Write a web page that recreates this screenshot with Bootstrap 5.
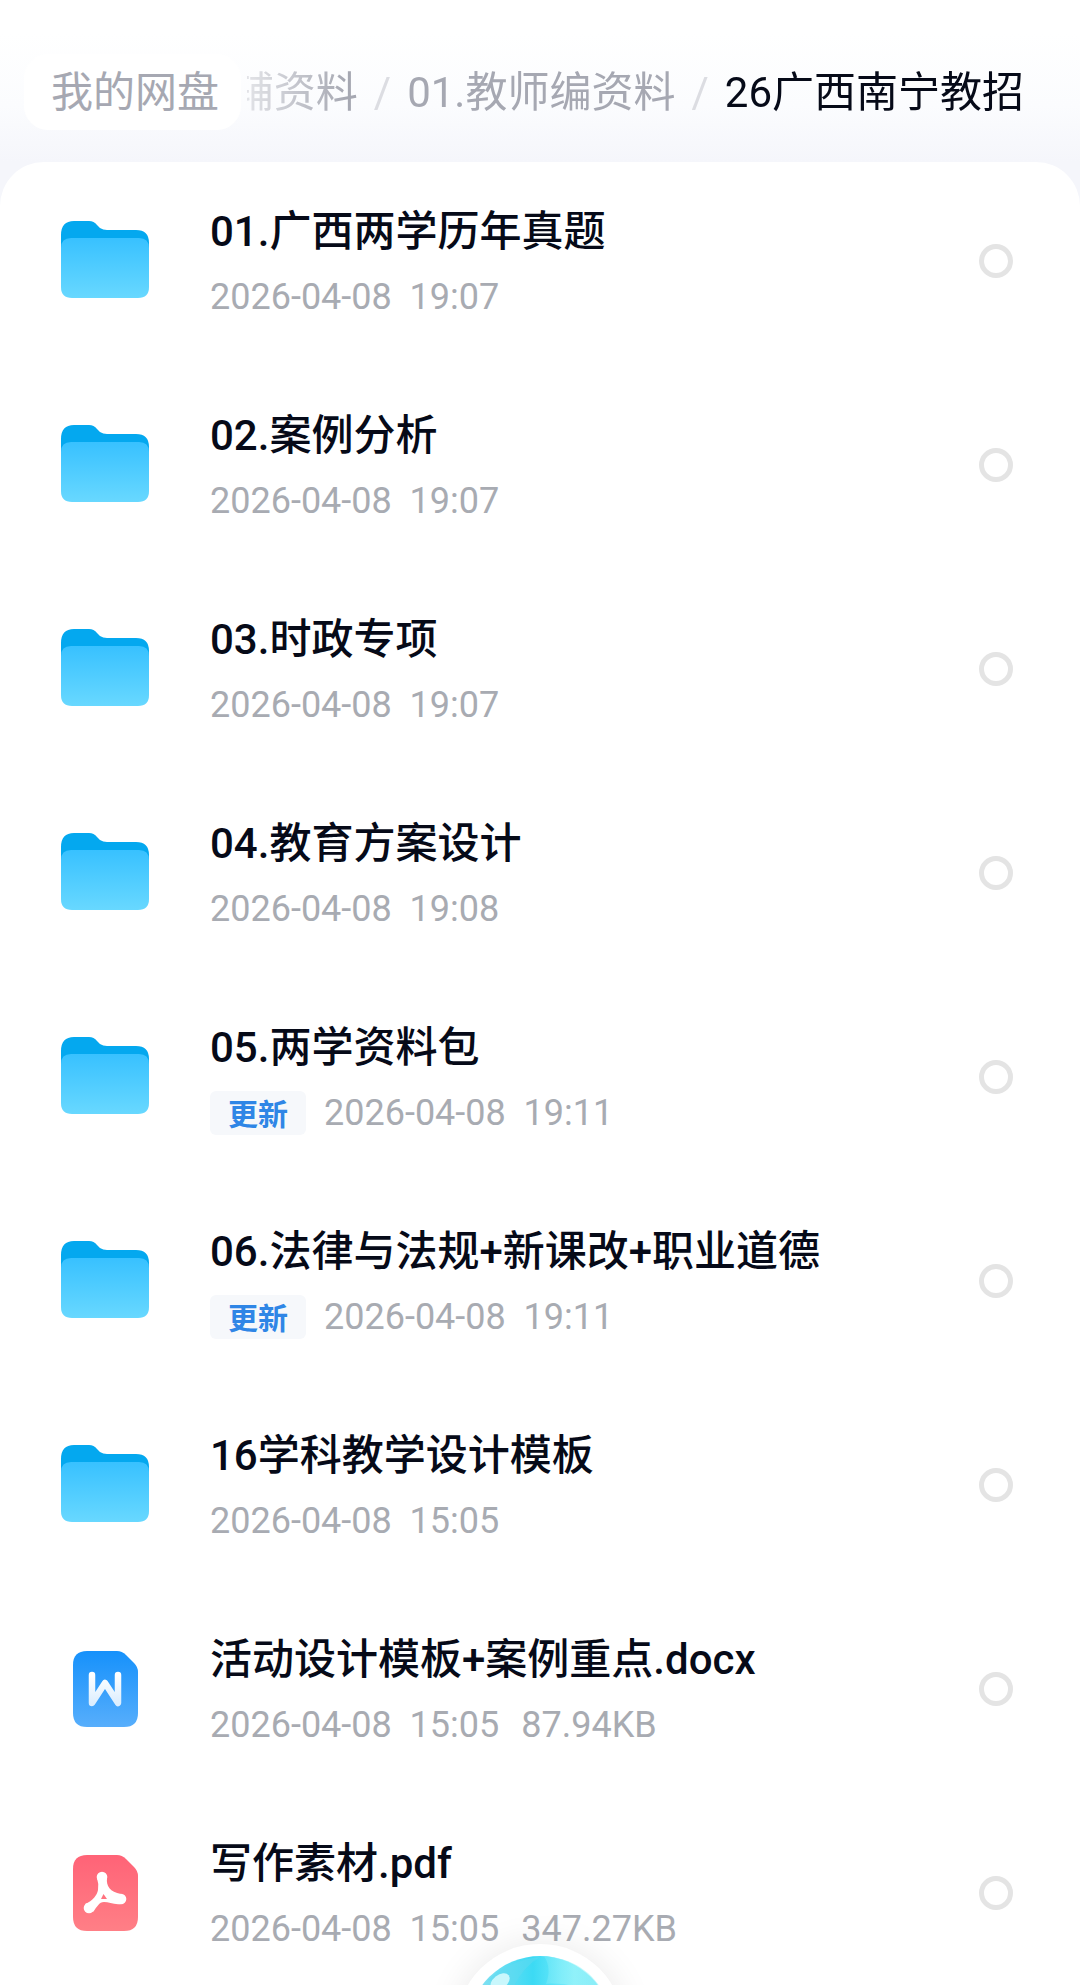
<!DOCTYPE html>
<html lang="zh-CN">
<head>
<meta charset="utf-8">
<meta name="viewport" content="width=device-width, initial-scale=1">
<title>26广西南宁教招</title>
<link href="https://cdn.jsdelivr.net/npm/bootstrap@5.3.0/dist/css/bootstrap.min.css" rel="stylesheet">
<style>
  body { font-family: Roboto, "Noto Sans CJK SC", sans-serif; background: #fff; color: #060a18; }
  a { color: inherit; text-decoration: none; }
  .path-bar { padding: 54px 56px 32px 24px; background: linear-gradient(#fff 20%, #fbfcfe 65%, #f5f6fb); }
  .path-bar, .file-name { font-size: 42px; line-height: 60px; }
  .path-root { padding: 9px 22px 7px 27px; border-radius: 24px; background: #fff; color: #a6a8b2; }
  .path-trail { -webkit-mask-image: linear-gradient(90deg, rgba(0,0,0,.3), #000 100px); mask-image: linear-gradient(90deg, rgba(0,0,0,.3), #000 100px); margin-left: 6px; padding-top: 2px; color: #a6a8b2; }
  .path-trail .breadcrumb-item + .breadcrumb-item { padding-left: 16px; }
  .path-trail .breadcrumb-item + .breadcrumb-item::before { padding-right: 16px; color: #dcdde2; }
  .path-trail .active { color: #060a18; }
  .file-panel { background: #f5f6fb; }
  .file-list { border-radius: 44px 44px 0 0; background: #fff; }
  .file-row { padding: 40px 67px 47px 60px; }
  .file-row:last-child { padding-bottom: 34px; }
  .file-icon { width: 90px; height: 80px; margin-right: 60px; }
  .file-name { font-weight: 500; margin-bottom: 13px; }
  .file-meta { font-size: 36px; line-height: 44px; color: #a8abb2; }
  .file-meta time { white-space: pre; }
  .file-size { margin-left: 22px; }
  .tag-new { padding: 3px 18px 0; margin-right: 18px; font-size: 30px; line-height: 41px; border-radius: 6px; background: #f6f8fb; color: #2f86e6; }
  .file-row .pick { width: 34px; height: 34px; margin: 0; border: 5px solid #e4e4e4; }
  .orb { width: 168px; height: 168px; bottom: -127px; padding: 12px; background: #fff; box-shadow: 0 0 36px rgba(0,0,0,.09); }
</style>
</head>
<body>
<svg class="position-absolute" width="0" height="0" aria-hidden="true">
  <defs>
    <linearGradient id="folderFace" x1="0" y1="0" x2="0" y2="1"><stop offset="0" stop-color="#38c1ff"/><stop offset="1" stop-color="#68d8ff"/></linearGradient>
    <linearGradient id="docFace" x1="0" y1="0" x2="0" y2="1"><stop offset="0" stop-color="#1691fb"/><stop offset="1" stop-color="#57aefc"/></linearGradient>
    <linearGradient id="docMark" x1="0" y1="0" x2="0" y2="1"><stop offset="0" stop-color="#fff"/><stop offset="1" stop-color="#dceefe"/></linearGradient>
    <linearGradient id="pdfFace" x1="0" y1="0" x2="0" y2="1"><stop offset="0" stop-color="#ff6377"/><stop offset="1" stop-color="#ff7f86"/></linearGradient>
  </defs>
</svg>

<header class="path-bar d-flex align-items-center">
  <a href="#" class="path-root flex-shrink-0">我的网盘</a>
  <nav class="path-trail flex-grow-1 overflow-hidden d-flex justify-content-end" aria-label="路径">
    <ol class="breadcrumb flex-nowrap flex-shrink-0 text-nowrap mb-0">
      <li class="breadcrumb-item"><a href="#">辅资料</a></li>
      <li class="breadcrumb-item"><a href="#">01.教师编资料</a></li>
      <li class="breadcrumb-item active" aria-current="page">26广西南宁教招</li>
    </ol>
  </nav>
</header>

<main class="file-panel">
  <ul class="file-list list-unstyled mb-0" id="files"></ul>
</main>

<button type="button" class="orb btn rounded-circle border-0 position-fixed start-50 translate-middle-x" aria-label="助手">
  <svg class="d-block" viewBox="0 0 144 144" aria-hidden="true">
    <defs>
      <linearGradient id="orbFace" x1="0" y1="0" x2="1" y2="0"><stop offset=".1" stop-color="#7fe0f2"/><stop offset=".45" stop-color="#3cdaf4"/><stop offset=".65" stop-color="#6ae8fa"/><stop offset=".9" stop-color="#7be6f8"/></linearGradient>
      <linearGradient id="orbShine" x1="0" y1="0" x2="1" y2="0"><stop offset="0" stop-color="#6fe8f8"/><stop offset=".5" stop-color="#a6f8fa"/><stop offset="1" stop-color="#8ef0f8"/></linearGradient>
    </defs>
    <circle cx="72" cy="72" r="72" fill="url(#orbFace)"/>
    <path d="M76 0C104 2 126 16 137 40C112 30 92 26 78 28Q84 12 76 0Z" fill="url(#orbShine)" opacity=".6"/>
    <path d="M20 24Q42 4 72 1Q56 10 46 30Z" fill="#62daf0" opacity=".5"/>
    <ellipse cx="32" cy="26" rx="11" ry="7" transform="rotate(-38 32 26)" fill="#c9f7fc"/>
  </svg>
</button>

<script src="https://cdn.jsdelivr.net/npm/bootstrap@5.3.0/dist/js/bootstrap.bundle.min.js"></script>
<script>
  const icons = {
    folder: '<path d="M1 14Q1 0 14 0H29Q34 0 37 4L40 7Q43 9 47 9H76Q89 9 89 22V40H1Z" fill="#04a8ef"/><path d="M1 27Q1 17 11 17H79Q89 17 89 27V66Q89 77 78 77H12Q1 77 1 66Z" fill="url(#folderFace)"/>',
    doc: '<path d="M13 16Q13 2 27 2H57Q62 2 66 6L74 14Q78 18 78 23V64Q78 78 64 78H27Q13 78 13 64Z" fill="url(#docFace)"/><path d="M32 26V54L45 34L58 54V26" fill="none" stroke="url(#docMark)" stroke-width="6.5" stroke-linecap="round" stroke-linejoin="round"/>',
    pdf: '<path d="M13 16Q13 2 27 2H57Q62 2 66 6L74 14Q78 18 78 23V64Q78 78 64 78H27Q13 78 13 64Z" fill="url(#pdfFace)"/><g fill="#fff"><circle cx="42" cy="24" r="5.300"/><circle cx="29" cy="55" r="5.300"/><circle cx="61" cy="46" r="5.300"/><path fill-rule="evenodd" d="M37 25H47C46 33 50 39 61 41V51C54 52 49 49 44 49C39 49 37 54 33 59L25 51C33 48 37 42 38 37Q39 31 37 25ZM43.500 41L41 46H47Z"/></g>'
  };
  const files = [
    ['folder', '01.广西两学历年真题', '2026-04-08  19:07'],
    ['folder', '02.案例分析', '2026-04-08  19:07'],
    ['folder', '03.时政专项', '2026-04-08  19:07'],
    ['folder', '04.教育方案设计', '2026-04-08  19:08'],
    ['folder', '05.两学资料包', '2026-04-08  19:11', '', true],
    ['folder', '06.法律与法规+新课改+职业道德', '2026-04-08  19:11', '', true],
    ['folder', '16学科教学设计模板', '2026-04-08  15:05'],
    ['doc', '活动设计模板+案例重点.docx', '2026-04-08  15:05', '87.94KB'],
    ['pdf', '写作素材.pdf', '2026-04-08  15:05', '347.27KB']
  ];
  document.getElementById('files').innerHTML = files.map(([icon, name, time, size, isNew], i) => `
    <li class="file-row d-flex align-items-center">
      <svg class="file-icon flex-shrink-0" viewBox="0 0 90 80" aria-hidden="true">${icons[icon]}</svg>
      <div class="flex-grow-1">
        <label class="file-name d-block" for="pick${i}">${name}</label>
        <div class="file-meta d-flex align-items-center">
          ${isNew ? '<span class="tag-new fw-bold">更新</span>' : ''}<time>${time}</time>${size ? `<span class="file-size">${size}</span>` : ''}
        </div>
      </div>
      <input class="pick form-check-input rounded-circle flex-shrink-0" type="checkbox" id="pick${i}">
    </li>`).join('');
</script>
</body>
</html>
